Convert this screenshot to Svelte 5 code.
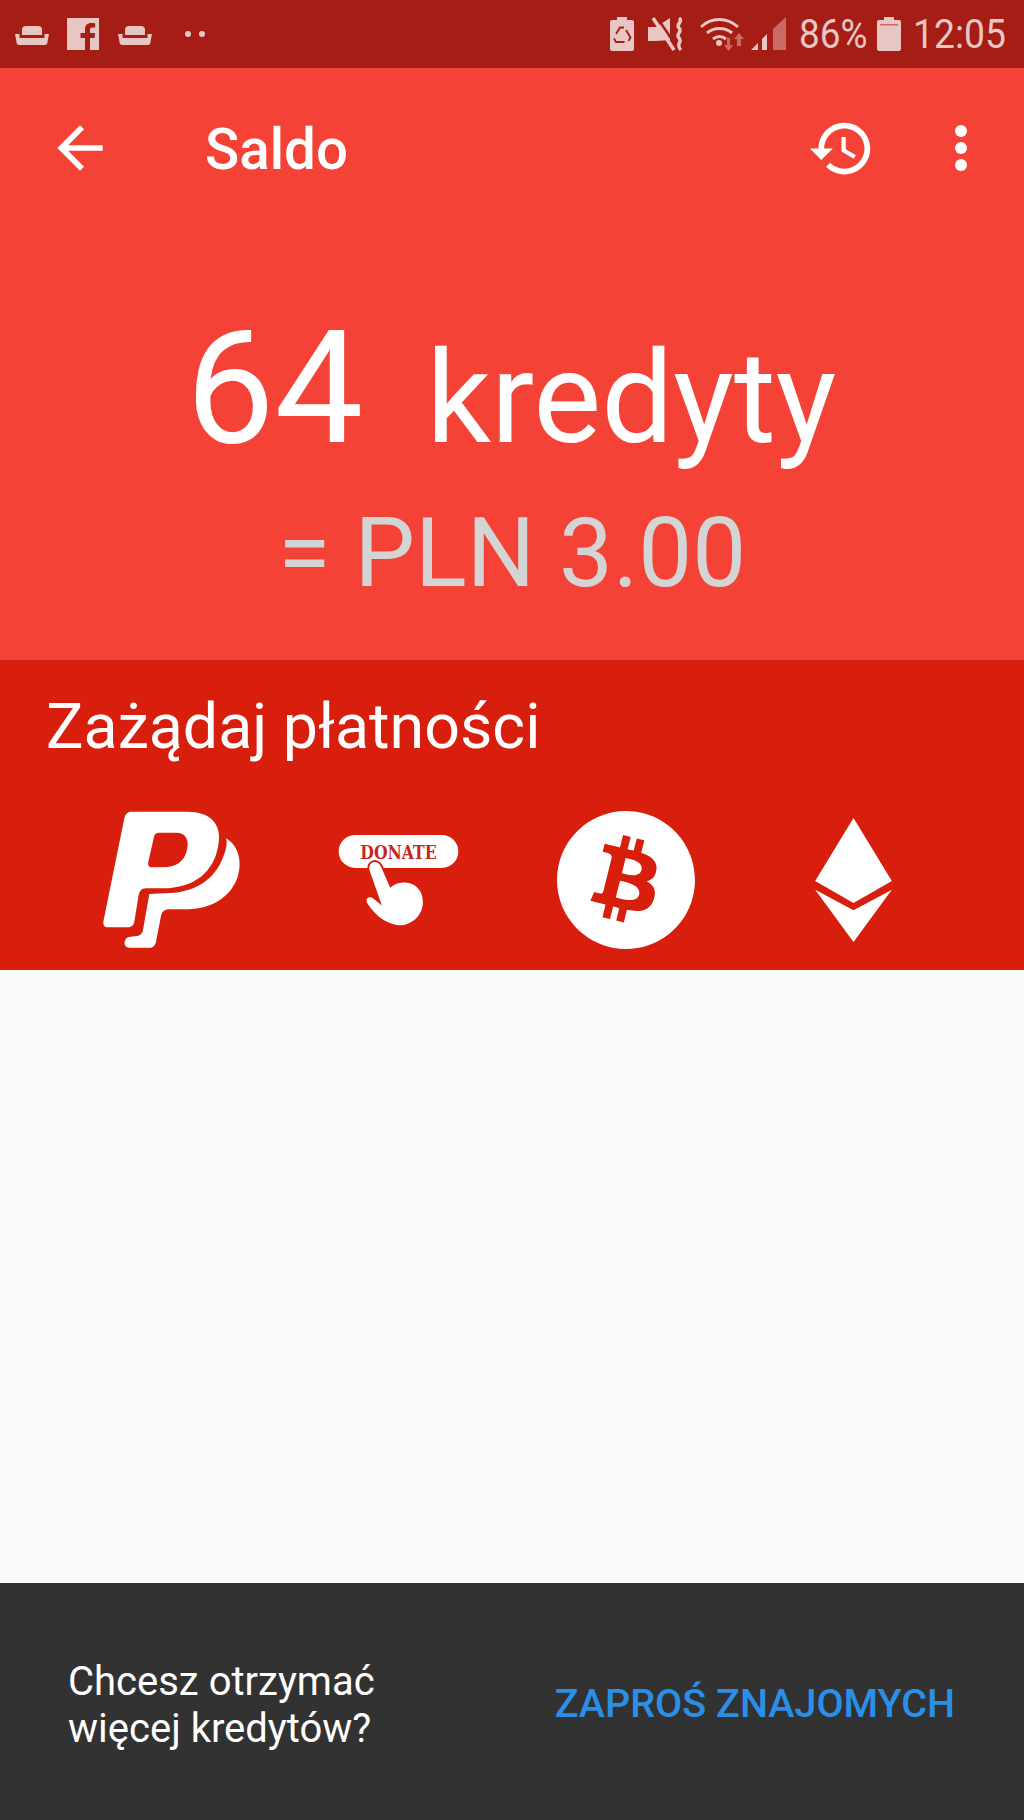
<script>
  const statusColor = '#e8c6c4';
</script>

<div class="screen">
  <div class="status">
    <div class="status-left">
      <svg class="sofa" viewBox="0 0 34 20" fill={statusColor}><path d="M7 5a4 4 0 0 1 4-4h12a4 4 0 0 1 4 4v5H7z"/><path d="M0 9h4.500v4h25V9H34l-1.500 8a3 3 0 0 1-3 3h-25a3 3 0 0 1-3-3z"/></svg>
      <svg class="fb" viewBox="0 0 32 32"><path fill={statusColor} d="M0 0h32v32H23V20h4.500l.6-5H23v-3c0-1.500.5-2.400 2.500-2.400H28.200V5.200C27.500 5.100 26 5 24.200 5 20.400 5 18 7.200 18 11.300V15h-4.500v5H18v12H0z"/></svg>
      <svg class="sofa" viewBox="0 0 34 20" fill={statusColor}><path d="M7 5a4 4 0 0 1 4-4h12a4 4 0 0 1 4 4v5H7z"/><path d="M0 9h4.500v4h25V9H34l-1.500 8a3 3 0 0 1-3 3h-25a3 3 0 0 1-3-3z"/></svg>
      <span class="dots"><i></i><i></i></span>
    </div>
    <div class="status-right">
      <svg class="st-batt" viewBox="0 0 24 34">
        <path fill={statusColor} d="M7 0h10v3h5a2 2 0 0 1 2 2v27a2 2 0 0 1-2 2H2a2 2 0 0 1-2-2V5a2 2 0 0 1 2-2h5z"/>
        <g fill="none" stroke="#a51d14" stroke-width="1.800">
          <path d="M6 17l4-6.500h4"/>
          <path d="M16 13l4.500 7.500-2 3.500"/>
          <path d="M14.500 25H6l-2-3.500"/>
        </g>
      </svg>
      <svg class="st-mute" viewBox="0 0 37 34">
        <path fill={statusColor} d="M0 10h8L22 1v22L8 24H0z"/>
        <path stroke="#a51d14" stroke-width="2.500" d="M8 -1l21 31"/>
        <path stroke={statusColor} stroke-width="3.500" d="M5 1l21 32"/>
        <path fill="none" stroke={statusColor} stroke-width="3.500" d="M31 1c5 4-4 6 0 10s-4 6 0 10-4 6 2 12"/>
      </svg>
      <svg class="st-wifi" viewBox="0 0 45 34">
        <g fill="none" stroke={statusColor} stroke-width="3">
          <path d="M1 10c10-10 26-10 37 0"/>
          <path d="M7 16c7-6 18-6 25 0"/>
          <path d="M13 22c4-3 9-3 13 0"/>
        </g>
        <circle cx="19" cy="26" r="3" fill={statusColor}/>
        <path fill="#c96a63" d="M27 21h3v7h3l-4.500 6-4.500-6h3z"/>
        <path fill="#c96a63" d="M39 16l5 6h-3v7h-4v-7h-3z"/>
      </svg>
      <svg class="st-signal" viewBox="0 0 35 34">
        <path fill={statusColor} d="M0 33l7-7v7z"/>
        <path fill={statusColor} d="M11 33V22l5-5v16z"/>
        <path fill="#c96a63" d="M22 33V12L35 0v33z"/>
      </svg>
      <span class="st-text pct">86%</span>
      <svg class="st-level" viewBox="0 0 24 34">
        <path fill={statusColor} d="M7 0h10v3h5a2 2 0 0 1 2 2v27a2 2 0 0 1-2 2H2a2 2 0 0 1-2-2V5a2 2 0 0 1 2-2h5z"/>
        <path fill="#c96a63" d="M3 7h18v1.500H3z"/>
      </svg>
      <span class="st-text time">12:05</span>
    </div>
  </div>

  <header class="balance">
    <div class="toolbar">
      <svg class="back" viewBox="0 0 24 24" fill="#fff"><path d="M20 11H7.830l5.590-5.590L12 4l-8 8 8 8 1.410-1.410L7.830 13H20v-2z"/></svg>
      <h1>Saldo</h1>
      <svg class="history" viewBox="0 0 24 24" fill="#fff"><path d="M13 3c-4.970 0-9 4.030-9 9H1l3.890 3.890.07.140L9 12H6c0-3.870 3.130-7 7-7s7 3.130 7 7-3.130 7-7 7c-1.930 0-3.680-.79-4.940-2.060l-1.420 1.420C8.270 19.990 10.510 21 13 21c4.970 0 9-4.030 9-9s-4.030-9-9-9zm-1 5v5l4.280 2.540.72-1.210-3.500-2.080V8H12z"/></svg>
      <span class="more"><i></i><i></i><i></i></span>
    </div>
    <div class="amount"><span class="num">64</span><span class="unit">kredyty</span></div>
    <div class="fiat">= PLN 3.00</div>
  </header>

  <section class="payout">
    <h2>Zażądaj płatności</h2>
    <div class="methods">
      <div class="method">
        <svg class="paypal" viewBox="60 60 420 420" fill="#fff">
          <path fill-rule="evenodd" d="M150 65L320 65C385 65 425 100 412 165C400 245 340 295 245 295L195 295C180 295 175 305 172 320L160 395C157 408 150 412 135 412L80 412C68 412 65 402 68 390L130 85C133 72 140 65 150 65ZM235 128L285 128C315 128 325 150 318 180C310 215 285 232 245 232L212 232C203 232 200 225 202 215L218 145C220 133 225 128 235 128Z"/>
          <path d="M435 145C470 165 485 210 470 260C450 320 395 355 320 358L265 358C250 358 243 365 240 378L225 455C222 468 215 473 205 473L145 473C133 473 128 462 132 452C135 443 140 440 150 440L165 438C178 438 184 430 186 420L205 312L250 310C340 310 400 270 425 205C435 180 440 160 435 145Z"/>
        </svg>
      </div>
      <div class="method">
        <svg class="donate" viewBox="770 130 370 280">
          <rect x="775" y="133" width="360" height="99" rx="49.500" fill="#fff"/>
          <text x="840" y="204" textLength="230" lengthAdjust="spacingAndGlyphs">DONATE</text>
          <path class="hand" d="M905 345L868 240C862 212 892 206 902 228L930 292C950 272 1000 265 1022 305C1040 345 1020 395 965 405C920 405 885 375 862 340C852 322 868 315 880 325Z"/>
        </svg>
      </div>
      <div class="method">
        <svg class="btc" viewBox="0 0 24 24" fill="#fff"><path d="M23.638 14.904c-1.602 6.430-8.113 10.340-14.542 8.736C2.670 22.050-1.244 15.525.362 9.105 1.962 2.670 8.475-1.243 14.900.358c6.430 1.605 10.342 8.115 8.738 14.548v-.002zm-6.350-4.613c.240-1.590-.974-2.450-2.640-3.030l.540-2.153-1.315-.330-.525 2.107c-.345-.087-.705-.167-1.064-.250l.526-2.127-1.320-.330-.540 2.165c-.285-.067-.565-.132-.840-.200l-1.815-.450-.350 1.407s.975.225.955.236c.535.136.630.486.615.766l-1.477 5.920c-.075.166-.240.406-.614.314.015.020-.960-.240-.960-.240l-.660 1.510 1.710.426.930.242-.540 2.190 1.320.327.540-2.170c.360.100.705.190 1.050.273l-.510 2.154 1.320.330.545-2.190c2.240.427 3.930.257 4.640-1.774.570-1.637-.030-2.580-1.217-3.196.854-.193 1.500-.760 1.680-1.930h.010zm-3.010 4.220c-.404 1.640-3.157.750-4.050.530l.720-2.900c.896.230 3.757.670 3.330 2.370zm.410-4.240c-.370 1.490-2.662.735-3.405.550l.654-2.640c.744.180 3.137.524 2.750 2.084v.006z"/></svg>
      </div>
      <div class="method">
        <svg class="eth" viewBox="855 83 230 372" fill="#fff">
          <path d="M970 83L1085 272L970 338L855 272Z"/>
          <path d="M855 298L970 360L1085 298L970 455Z"/>
        </svg>
      </div>
    </div>
  </section>

  <main class="empty"></main>

  <footer class="invite">
    <p>Chcesz otrzymać<br />więcej kredytów?</p>
    <span class="cta">ZAPROŚ ZNAJOMYCH</span>
  </footer>
</div>

<style>
  :global(body) {
    margin: 0;
    background: #f9f9f9;
  }

  .screen {
    width: 1024px;
    height: 1820px;
    display: flex;
    flex-direction: column;
    font-family: Roboto, sans-serif;
    overflow: hidden;
  }

  svg {
    display: block;
    flex: none;
  }

  /* status bar */
  .status {
    height: 68px;
    background: #a51d14;
    display: flex;
    align-items: center;
    justify-content: space-between;
    padding: 0 18px 0 15px;
    box-sizing: border-box;
  }

  .status-left {
    display: flex;
    align-items: center;
  }

  .sofa {
    width: 34px;
    height: 20px;
    margin-top: 1px;
  }

  .fb {
    width: 32px;
    height: 32px;
    margin: 0 19px 0 18px;
  }

  .dots {
    display: flex;
    gap: 8px;
    margin-left: 33px;
  }

  .dots i {
    width: 6px;
    height: 6px;
    border-radius: 50%;
    background: #e8c6c4;
  }

  .status-right {
    display: flex;
    align-items: center;
  }

  .st-batt {
    width: 24px;
    height: 34px;
  }

  .st-mute {
    width: 37px;
    height: 34px;
    margin-left: 14px;
  }

  .st-wifi {
    width: 45px;
    height: 34px;
    margin-left: 15px;
  }

  .st-signal {
    width: 35px;
    height: 34px;
    margin-left: 6px;
  }

  .st-text {
    color: #e8c6c4;
    font-size: 41px;
    line-height: 68px;
    display: block;
    transform-origin: left center;
  }

  .pct {
    width: 67px;
    margin-left: 13px;
    transform: scaleX(0.9);
  }

  .st-level {
    width: 24px;
    height: 34px;
    margin-left: 11px;
  }

  .time {
    width: 93px;
    margin-left: 12px;
    transform: scaleX(0.91);
  }

  /* balance header */
  .balance {
    height: 592px;
    background: #f44336;
    color: #fff;
    box-sizing: border-box;
  }

  .toolbar {
    height: 160px;
    display: flex;
    align-items: center;
    padding-left: 46px;
  }

  .back {
    width: 68px;
    height: 68px;
  }

  h1 {
    margin: 3px 0 0 91px;
    font-size: 56.500px;
    font-weight: 500;
    flex: 1;
  }

  .history {
    width: 69px;
    height: 69px;
  }

  .more {
    width: 12px;
    display: flex;
    flex-direction: column;
    gap: 5px;
    margin: 0 57px 0 79px;
  }

  .more i {
    width: 12px;
    height: 12px;
    border-radius: 50%;
    background: #fff;
  }

  .amount {
    display: flex;
    justify-content: center;
    align-items: baseline;
    gap: 63px;
    line-height: 160px;
    margin-top: 80px;
    padding-right: 2px;
  }

  .num {
    font-size: 158px;
    font-weight: 400;
  }

  .unit {
    font-size: 128px;
    font-weight: 400;
  }

  .fiat {
    text-align: center;
    color: #d4d4d4;
    font-size: 96px;
    line-height: 110px;
    margin-top: 20px;
  }

  /* payout methods */
  .payout {
    height: 310px;
    background: #d81f0d;
    box-sizing: border-box;
    padding: 32px 0 0 46px;
  }

  h2 {
    margin: 0;
    color: #fff;
    font-size: 62.700px;
    font-weight: 400;
    line-height: 70px;
  }

  .methods {
    display: grid;
    grid-template-columns: repeat(4, 227.5px);
    margin: 48px 0 0 11px;
    height: 140px;
    align-items: center;
    justify-items: center;
  }

  .paypal {
    width: 140px;
    height: 140px;
  }

  .donate {
    width: 123px;
    height: 93px;
  }

  .donate text {
    font-family: "DejaVu Serif", serif;
    font-weight: 700;
    font-size: 54px;
    fill: #c7271b;
  }

  .hand {
    fill: #fff;
    stroke: #d81f0d;
    stroke-width: 12px;
    paint-order: stroke;
  }

  .btc {
    width: 138px;
    height: 138px;
  }

  .eth {
    width: 77px;
    height: 124px;
  }

  .empty {
    flex: 1;
    background: #f9f9f9;
  }

  /* invite footer */
  .invite {
    height: 237px;
    background: #323232;
    display: flex;
    align-items: center;
    justify-content: space-between;
    padding: 0 69px 0 68px;
    box-sizing: border-box;
  }

  .invite p {
    margin: 6px 0 0;
    color: #fff;
    font-size: 40px;
    line-height: 47px;
  }

  .cta {
    color: #2b8fe8;
    font-size: 39.500px;
    font-weight: 500;
    margin-top: 4px;
  }
</style>
